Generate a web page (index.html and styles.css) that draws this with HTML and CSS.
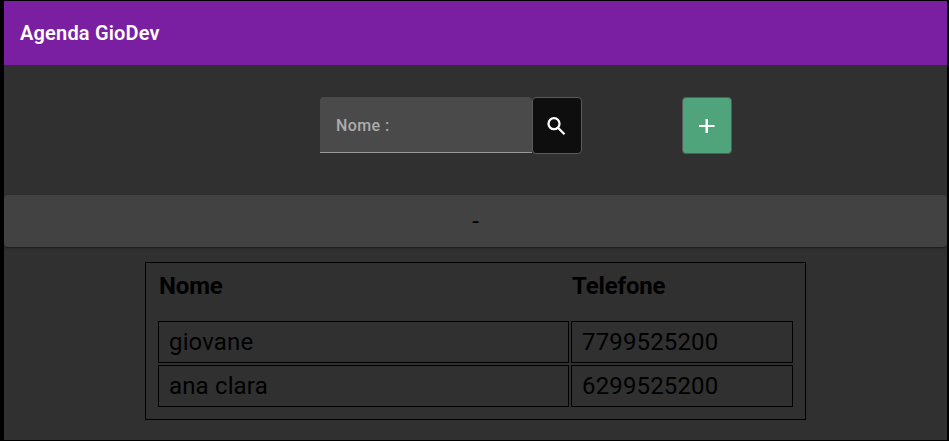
FILE: index.html
```html
<!DOCTYPE html>
<html lang="pt-BR">
<head>
<meta charset="utf-8">
<title>Agenda GioDev</title>
<link rel="stylesheet" href="styles.css">
</head>
<body>
<div class="app">
  <header class="toolbar"><h1 class="title">Agenda GioDev</h1></header>
  <main>
    <div class="actions">
      <label class="field">Nome :</label>
      <button class="btn btn-search" aria-label="Pesquisar">
        <svg width="24" height="24" viewBox="0 0 24 24" fill="none" stroke="currentColor" stroke-width="2.3"><circle cx="9" cy="9.700" r="5.500"/><path d="M13 13.700l6.500 6.500"/></svg>
      </button>
      <button class="btn btn-add" aria-label="Adicionar">
        <svg width="24" height="24" viewBox="0 0 24 24" fill="currentColor"><path d="M19.500 13h-6.500v6h-2.500v-6H4v-2h6.500V5H13v6h6.500v2z"/></svg>
      </button>
    </div>
    <div class="card">-</div>
    <table class="contacts">
      <thead><tr><th class="name">Nome</th><th class="phone">Telefone</th></tr></thead>
      <tbody>
        <tr><td>giovane</td><td>7799525200</td></tr>
        <tr><td>ana clara</td><td>6299525200</td></tr>
      </tbody>
    </table>
  </main>
</div>
</body>
</html>
```
FILE: styles.css
```css
* { box-sizing: border-box; }
body {
  margin: 0;
  height: 441px;
  padding: 1px 2px 1px 4px;
  background: #000;
  font-family: Roboto, sans-serif;
  overflow: hidden;
}
.app { height: 439px; background: #303030; overflow: hidden; }
.toolbar {
  display: flex;
  align-items: center;
  height: 64px;
  padding: 0 16px;
  background: #7b1fa2;
  color: #fff;
}
.title { margin: 0; font-size: 20px; font-weight: 600; line-height: 32px; letter-spacing: 0.18px; }
.actions {
  display: flex;
  align-items: flex-start;
  height: 130px;
  padding: 32px 0 0 316px;
}
.field {
  display: flex;
  align-items: center;
  width: 212px;
  height: 56px;
  padding: 1px 16px 0;
  background: #4a4a4a;
  border-bottom: 1px solid #989898;
  border-radius: 4px 4px 0 0;
  color: #acacac;
  font-size: 16px;
  font-weight: 500;
  letter-spacing: 0.4px;
}
.btn {
  display: flex;
  align-items: center;
  justify-content: center;
  width: 50px;
  height: 57px;
  padding: 0;
  border: 1px solid #5a5a5a;
  border-radius: 4px;
  color: #fff;
}
.btn-search { background: #0e0e0e; }
.btn-add { margin-left: 100px; background: #50a47b; }
.card {
  height: 52px;
  border-radius: 4px;
  background: #424242;
  box-shadow: 0 2px 1px -1px rgba(0,0,0,.2), 0 1px 1px rgba(0,0,0,.14), 0 1px 3px rgba(0,0,0,.12);
  color: #000;
  font-size: 24px;
  line-height: 52px;
  text-align: center;
}
.contacts {
  width: 661px;
  margin: 15px 0 0 141px;
  padding: 10px;
  border: 1px solid #000;
  border-spacing: 2px;
  table-layout: fixed;
  color: #000;
  font-size: 24px;
  line-height: 22px;
}
.contacts th {
  height: 44px;
  padding: 0 1px 22px;
  text-align: left;
  vertical-align: top;
  font-weight: 700;
  letter-spacing: -0.15px;
}
.name { width: 411px; }
.phone { width: 222px; }
.contacts td {
  height: 42px;
  padding: 0 10px;
  border: 1px solid #000;
  letter-spacing: 0.15px;
}
```
